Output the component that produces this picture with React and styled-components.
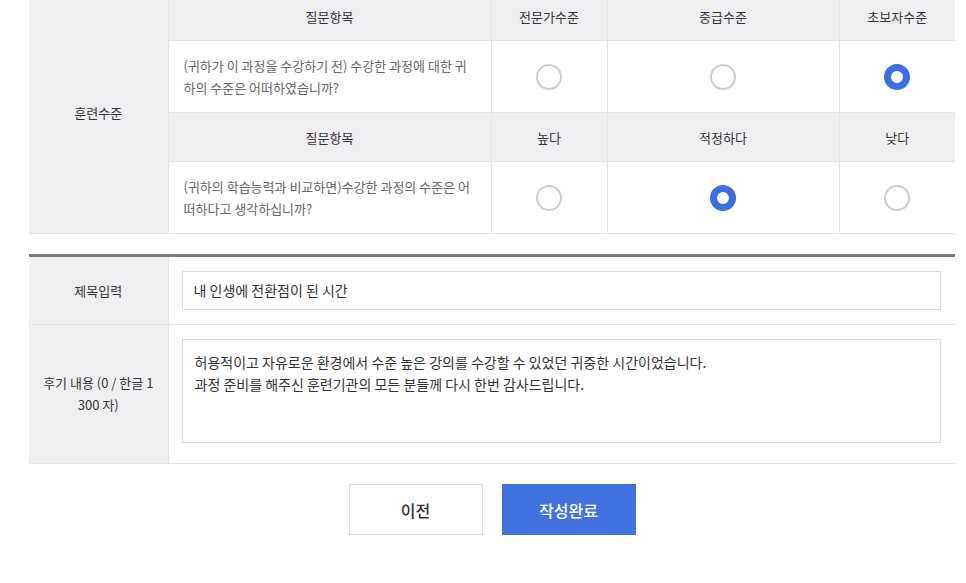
import React from 'react'
import styled, { createGlobalStyle } from 'styled-components'

const GlobalStyle = createGlobalStyle`
  body {
    margin: 0;
    background: #fff;
    font-family: "Noto Sans CJK KR", "Noto Sans", sans-serif;
    color: #333;
  }
`

const Page = styled.div`
  width: 926px;
  margin-left: 29px;
  margin-top: -8px;
`

const Table = styled.table`
  width: 100%;
  border-collapse: collapse;
  table-layout: fixed;
  border-top: ${p => (p.$strong ? '3px solid #777' : 'none')};
  margin-top: ${p => (p.$strong ? '20px' : '0')};
`

const Label = styled.th`
  background: #efeff1;
  font-weight: 400;
  font-size: 13px;
  color: #333;
  text-align: center;
  padding: 0 13px;
  line-height: 22px;
  word-break: break-all;
  border-right: 1px solid #e4e4e6;
  border-bottom: 1px solid #e4e4e6;
`

const Head = styled.th`
  background: #efeff1;
  font-weight: 400;
  font-size: 13px;
  color: #333;
  height: 48px;
  padding: 0;
  text-align: center;
  border-left: 1px solid #e4e4e6;
  border-bottom: 1px solid #e4e4e6;
`

const Question = styled.td`
  height: 71px;
  padding: 0 15px;
  font-size: 13px;
  line-height: 22px;
  color: #666;
  word-break: break-all;
  border-left: 1px solid #e4e4e6;
  border-bottom: 1px solid #e4e4e6;
`

const Choice = styled.td`
  text-align: center;
  border-left: 1px solid #e4e4e6;
  border-bottom: 1px solid #e4e4e6;
  padding: 0;
`

const Radio = styled.span`
  display: inline-block;
  vertical-align: middle;
  box-sizing: border-box;
  width: 26px;
  height: 26px;
  border-radius: 50%;
  background: #fff;
  border: ${p => (p.$on ? '7px solid #3d6fe0' : '2px solid #cdcdd0')};
`

const Field = styled.td`
  padding: ${p => p.$pad};
  border-bottom: 1px solid #e4e4e6;
`

const TextBox = styled.div`
  box-sizing: border-box;
  width: 759px;
  height: ${p => p.$h};
  border: 1px solid #dcdcdc;
  padding: ${p => p.$pad};
  font-size: 14px;
  line-height: 22px;
  color: #333;
`

const Buttons = styled.div`
  display: flex;
  justify-content: center;
  gap: 19px;
  padding-top: 20px;
`

const Button = styled.button`
  box-sizing: border-box;
  width: 134px;
  height: 51px;
  font-family: "Noto Sans CJK KR", "Noto Sans", sans-serif;
  font-size: 16px;
  font-weight: 500;
  border: 1px solid ${p => (p.$primary ? '#3d6fe0' : '#dcdcdc')};
  background: ${p => (p.$primary ? '#4172e0' : '#fff')};
  color: ${p => (p.$primary ? '#fff' : '#333')};
`

const surveys = [
  {
    heads: ['전문가수준', '중급수준', '초보자수준'],
    q: '(귀하가 이 과정을 수강하기 전) 수강한 과정에 대한 귀하의 수준은 어떠하였습니까?',
    pick: 2,
  },
  {
    heads: ['높다', '적정하다', '낮다'],
    q: '(귀하의 학습능력과 비교하면)수강한 과정의 수준은 어떠하다고 생각하십니까?',
    pick: 1,
  },
]

export default function App() {
  return (
    <Page>
      <GlobalStyle />
      <Table>
        <colgroup>
          <col style={{ width: 139 }} />
          <col style={{ width: 323 }} />
          <col style={{ width: 116 }} />
          <col style={{ width: 232 }} />
          <col style={{ width: 116 }} />
        </colgroup>
        <tbody>
          {surveys.map((s, i) => (
            <React.Fragment key={i}>
              <tr>
                {i === 0 && <Label rowSpan={4}>훈련수준</Label>}
                <Head>질문항목</Head>
                {s.heads.map(h => (
                  <Head key={h}>{h}</Head>
                ))}
              </tr>
              <tr>
                <Question>{s.q}</Question>
                {s.heads.map((h, j) => (
                  <Choice key={h}>
                    <Radio $on={j === s.pick} />
                  </Choice>
                ))}
              </tr>
            </React.Fragment>
          ))}
        </tbody>
      </Table>

      <Table $strong>
        <colgroup>
          <col style={{ width: 139 }} />
          <col />
        </colgroup>
        <tbody>
          <tr>
            <Label>제목입력</Label>
            <Field $pad="14px 14px 14px 13px">
              <TextBox $h="39px" $pad="7px 11px">내 인생에 전환점이 된 시간</TextBox>
            </Field>
          </tr>
          <tr>
            <Label>후기 내용 (0 / 한글 1300 자)</Label>
            <Field $pad="14px 14px 20px 13px">
              <TextBox $h="104px" $pad="11px 12px">
                허용적이고 자유로운 환경에서 수준 높은 강의를 수강할 수 있었던 귀중한 시간이었습니다.
                <br />
                과정 준비를 해주신 훈련기관의 모든 분들께 다시 한번 감사드립니다.
              </TextBox>
            </Field>
          </tr>
        </tbody>
      </Table>

      <Buttons>
        <Button>이전</Button>
        <Button $primary>작성완료</Button>
      </Buttons>
    </Page>
  )
}
